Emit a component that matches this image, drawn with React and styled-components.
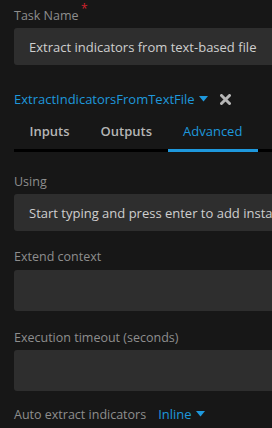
import React from 'react';
import styled, { createGlobalStyle } from 'styled-components';

const Global = createGlobalStyle`
  html, body {
    margin: 0;
    padding: 0;
    background: #171717;
  }
  body {
    font-family: "Open Sans", "Noto Sans", sans-serif;
    overflow: hidden;
  }
`;

const Page = styled.div`
  width: 272px;
  height: 428px;
  overflow: hidden;
  background: #171717;
  padding: 7px 0 0 14px;
  box-sizing: border-box;
`;

const Field = styled.div`
  display: flex;
  flex-direction: column;
  margin-bottom: ${(p) => p.gap || 14}px;
`;

const Label = styled.label`
  position: relative;
  align-self: flex-start;
  font-size: 12.5px;
  line-height: 18px;
  color: #8e8e8e;
  margin-bottom: ${(p) => p.space || 3}px;
  white-space: nowrap;
`;

const Required = styled.span`
  position: absolute;
  top: -7px;
  right: -9px;
  color: #d0222c;
  font-size: 12px;
`;

const Box = styled.div`
  width: 280px;
  height: ${(p) => p.h || 37}px;
  background: #2e2e2e;
  border-radius: 3px;
  padding: 0 15px;
  box-sizing: border-box;
  display: flex;
  align-items: center;
  font-size: 13px;
  color: #cfcfcf;
  white-space: nowrap;
  overflow: hidden;
`;

const Playbook = styled.div`
  display: flex;
  align-items: center;
  height: 24px;
  margin-top: 22px;
  gap: 12px;
`;

const Link = styled.span`
  display: inline-flex;
  align-items: center;
  gap: 4px;
  color: #1e98dc;
  font-size: 13px;
  white-space: nowrap;
`;

const Caret = () => (
  <svg width="9" height="6" viewBox="0 0 9 6">
    <path d="M0 0 H9 L4.5 5.5 Z" fill="#1e98dc" />
  </svg>
);

const Close = () => (
  <svg width="11" height="11" viewBox="0 0 11 11">
    <path d="M1.5 1.5 L9.5 9.5 M9.5 1.5 L1.5 9.5" stroke="#b5b5b5" strokeWidth="3" strokeLinecap="round" />
  </svg>
);

const Tabs = styled.div`
  display: flex;
  border-bottom: 3px solid #000;
  margin-top: 4px;
  margin-bottom: 21px;
`;

const Tab = styled.div`
  flex: ${(p) => (p.fill ? 1 : 'none')};
  padding: 0 15.5px;
  height: 37px;
  line-height: 33px;
  font-size: 13px;
  font-weight: ${(p) => (p.active ? 400 : 600)};
  color: ${(p) => (p.active ? '#1e98dc' : '#b5b5b5')};
  box-shadow: ${(p) => (p.active ? 'inset 0 -3px 0 #1e98dc' : 'none')};
  margin-bottom: -3px;
  white-space: nowrap;
`;

const Row = styled.div`
  display: flex;
  align-items: center;
  gap: 12px;
  font-size: 12.5px;
  color: #8e8e8e;
`;

export default function App() {
  return (
    <Page>
      <Global />
      <Field gap={0}>
        <Label>
          Task Name<Required>*</Required>
        </Label>
        <Box>Extract indicators from text-based file</Box>
      </Field>
      <Playbook>
        <Link>
          ExtractIndicatorsFromTextFile <Caret />
        </Link>
        <Close />
      </Playbook>
      <Tabs>
        <Tab>Inputs</Tab>
        <Tab>Outputs</Tab>
        <Tab active>Advanced</Tab>
        <Tab fill />
      </Tabs>
      <Field gap={17}>
        <Label>Using</Label>
        <Box>Start typing and press enter to add instance</Box>
      </Field>
      <Field gap={18}>
        <Label space={4}>Extend context</Label>
        <Box h={41} />
      </Field>
      <Field gap={14}>
        <Label space={3}>Execution timeout (seconds)</Label>
        <Box h={41} />
      </Field>
      <Row>
        Auto extract indicators
        <Link>
          Inline <Caret />
        </Link>
      </Row>
    </Page>
  );
}
